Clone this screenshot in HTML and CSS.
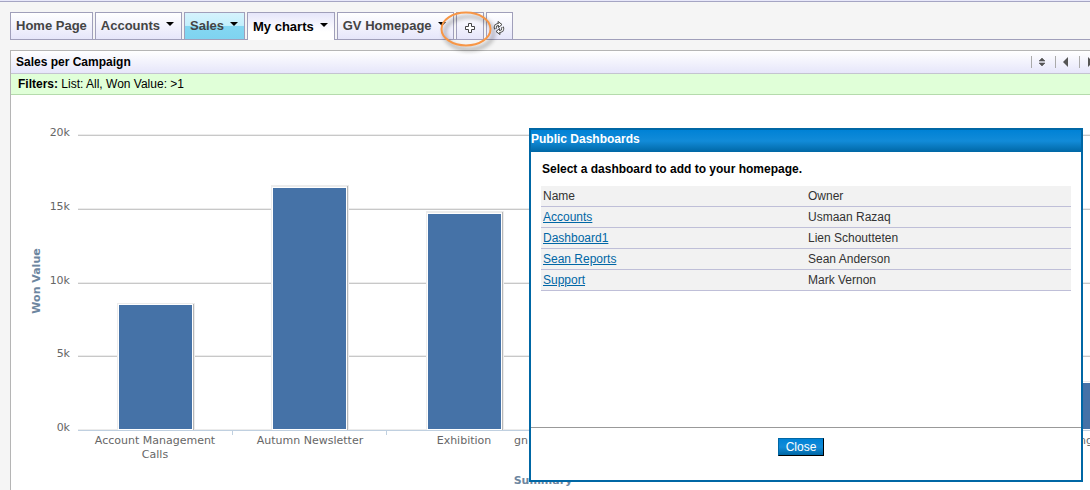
FILE: index.html
```html
<!DOCTYPE html>
<html lang="en">
<head>
<meta charset="utf-8">
<title>Sales per Campaign</title>
<link rel="stylesheet" href="styles.css">
</head>
<body>
<div class="topline"></div>
<nav class="tabs">
  <button class="tab">Home Page</button>
  <button class="tab">Accounts<span class="caret"></span></button>
  <button class="tab tab-sales">Sales<span class="caret"></span></button>
  <button class="tab tab-active">My charts<span class="caret"></span></button>
  <button class="tab">GV Homepage<span class="caret"></span></button>
  <button class="tab tab-icon" aria-label="Add dashboard">
    <svg width="12" height="12" viewBox="0 0 12 12"><path d="M4.500 1.500h3v3h3v3h-3v3h-3v-3h-3v-3h3z" fill="#fff" stroke="#444"/></svg>
    <svg class="ring" width="64" height="48" viewBox="0 0 64 48"><ellipse cx="31" cy="24" rx="24.500" ry="16.500" fill="none" stroke="#f79646" stroke-width="2"/></svg>
  </button>
  <button class="tab tab-icon tab-refresh" aria-label="Refresh">
    <svg width="12" height="16" viewBox="0 0 12 16"><g fill="none" stroke="#444" stroke-width="3"><path d="M2.500 9C1.500 6 3 4.500 6 4.500"/><path d="M9.500 7C10.500 10 9 11.500 6 11.500"/></g><g fill="#fff" stroke="#444" stroke-linejoin="round"><path d="M5 1.500L9 4.500 5.500 7.500z"/><path d="M7 14.500L3 11.500 6.500 8.500z"/></g><g fill="none" stroke="#fff" stroke-width="1.200"><path d="M2.500 8.500C1.500 6 3 4.500 6 4.500"/><path d="M9.500 7.500C10.500 10 9 11.500 6 11.500"/></g></svg>
  </button>
</nav>
<main class="panel">
  <header class="panel-head">
    <h1 class="panel-title">Sales per Campaign</h1>
    <div class="tools">
      <button class="tool" aria-label="Collapse"><svg width="8" height="10" viewBox="0 0 8 10"><path d="M1 4L4 1l3 3zM1 6h6L4 9z" fill="#555" stroke="#555" stroke-width=".6"/></svg></button>
      <button class="tool" aria-label="Move left"><svg width="8" height="10" viewBox="0 0 8 10"><path d="M6 0v10L1 5z" fill="#555"/></svg></button>
      <button class="tool" aria-label="Move right"><svg width="8" height="10" viewBox="0 0 8 10"><path d="M2 0v10L7 5z" fill="#555"/></svg></button>
      <span class="tool"></span>
      <span class="tool"></span>
    </div>
  </header>
  <p class="filters"><b>Filters:</b> List: All, Won Value: &gt;1</p>
  <svg class="chart" width="1140" height="395" viewBox="11 95 1140 395">
    <g class="grid-soft"><path d="M78 134.500H1151M78 208.500H1151M78 282.500H1151M78 355.500H1151M78 429.500H1151"/></g>
    <g class="grid"><path d="M78 135.500H1151M78 209.500H1151M78 283.500H1151M78 356.500H1151"/></g>
    <path class="axis" d="M78 430.500H1151M232.500 430v5M386.500 430v5M541.500 430v5M1005.500 430v5"/>
    <g class="bar-shade">
      <path d="M117 303h78v127h-78zM271 185h78v245h-78zM426 211h78v219h-78zM1044 381h78v49h-78z"/>
    </g>
    <g class="bar-edge">
      <path d="M193 304h1v126h-1zM347 186h1v244h-1zM502 212h1v218h-1z"/>
    </g>
    <g class="bar">
      <rect x="118.500" y="304.500" width="74" height="125"/>
      <rect x="272.500" y="187.500" width="74" height="242"/>
      <rect x="427.500" y="213.500" width="74" height="216"/>
      <rect x="1045.500" y="382.500" width="74" height="47"/>
    </g>
    <g class="label label-y">
      <text x="70" y="136">20k</text>
      <text x="70" y="210">15k</text>
      <text x="70" y="284">10k</text>
      <text x="70" y="357">5k</text>
      <text x="70" y="431">0k</text>
    </g>
    <g class="label label-x">
      <text x="155" y="444">Account Management</text>
      <text x="155" y="458">Calls</text>
      <text x="310" y="444">Autumn Newsletter</text>
      <text x="464" y="444">Exhibition</text>
      <text x="521" y="444">gn</text>
      <text x="1086" y="444">ng</text>
    </g>
    <text class="axis-title" transform="translate(40 281) rotate(-90)">Won Value</text>
    <text class="axis-title" x="543" y="484">Summary</text>
  </svg>
</main>
<section class="dialog" role="dialog" aria-labelledby="dialog-title">
  <h2 class="dialog-title" id="dialog-title">Public Dashboards</h2>
  <div class="dialog-body">
    <p class="prompt">Select a dashboard to add to your homepage.</p>
    <table class="list">
      <thead><tr><th>Name</th><th>Owner</th></tr></thead>
      <tbody>
        <tr><td><a href="#">Accounts</a></td><td>Usmaan Razaq</td></tr>
        <tr><td><a href="#">Dashboard1</a></td><td>Lien Schoutteten</td></tr>
        <tr><td><a href="#">Sean Reports</a></td><td>Sean Anderson</td></tr>
        <tr><td><a href="#">Support</a></td><td>Mark Vernon</td></tr>
      </tbody>
    </table>
  </div>
  <footer class="dialog-foot"><button class="close">Close</button></footer>
</section>
</body>
</html>
```
FILE: styles.css
```css
* { box-sizing: border-box; }
html { overflow: hidden; }
body {
  margin: 0;
  position: relative;
  overflow: hidden;
  background: #f5f5f5;
  color: #000;
  font: 12px/16px "Liberation Sans", Arial, sans-serif;
}
h1, h2, p { margin: 0; font-size: 12px; }
button { font: inherit; margin: 0; cursor: pointer; }

.topline { height: 2px; background: #e8e8fa; border-bottom: 1px solid #a5a5c3; }
.tabs {
  display: flex;
  gap: 2px;
  margin-left: 10px;
  padding-top: 10px;
  border-bottom: 1px solid #a09fba;
}
.tab {
  display: flex;
  align-items: center;
  height: 27px;
  padding: 0 5px;
  border: 1px solid #a09fba;
  border-bottom: 0;
  background: linear-gradient(#fff, #e6e6fa);
  color: #444;
  font-size: 13px;
  font-weight: bold;
  white-space: nowrap;
}
.tab-sales {
  padding-right: 4px;
  background: linear-gradient(#d6f3fd 0%, #c3effc 48%, #84d7f2 50%, #7fd3f0 100%);
}
.tab-active {
  height: 28px;
  margin-bottom: -1px;
  padding-right: 4px;
  background: linear-gradient(#e6e6fa, #fff 70%);
  color: #000;
}
.tab-icon {
  position: relative;
  width: 28px;
  justify-content: center;
  padding: 4px 0 0;
}
.tab-refresh { width: 27px; }
.caret {
  margin: 0 2px 4px 6px;
  border: 4px solid transparent;
  border-top-color: #000;
  border-bottom: 0;
}
.ring {
  position: absolute;
  left: -22px;
  top: -8px;
  z-index: 1;
  filter: drop-shadow(3px 4px 2px rgba(0, 0, 0, .45));
}

.panel {
  margin: 10px -62px 0 10px;
  border: 1px solid #b5b5b5;
  border-bottom: 0;
  background: #fff;
}
.panel-head {
  display: flex;
  justify-content: space-between;
  align-items: center;
  height: 23px;
  padding-left: 5px;
  border-bottom: 1px solid #c4c4d0;
  background: linear-gradient(#fff, #e6e6fa);
}
.tools { display: flex; }
.tool {
  display: flex;
  align-items: center;
  width: 24px;
  height: 12px;
  padding: 0 0 0 6px;
  border: 0;
  border-left: 1px solid #aaa;
  background: none;
}
.filters {
  padding: 2px 7px;
  border-bottom: 1px solid #b5dbac;
  background: #e0ffd8;
}
.chart { display: block; }
.grid-soft { stroke: #ececec; }
.grid { stroke: #c8c8c8; }
.axis { stroke: #c0d0e0; fill: none; }
.bar-shade { fill: #ececec; }
.bar-edge { fill: #b8b8b8; }
.bar { fill: #4572a7; stroke: #fff; }
.label { font: 11px "DejaVu Sans", sans-serif; fill: #666; }
.label-y { text-anchor: end; }
.label-x { text-anchor: middle; }
.axis-title {
  font: bold 11px "DejaVu Sans", sans-serif;
  fill: #6d869f;
  text-anchor: middle;
}

.dialog {
  position: absolute;
  top: 128px;
  right: 7px;
  width: 554px;
  border: 2px solid #0067a5;
  background: #fff;
}
.dialog-title {
  height: 22px;
  line-height: 18px;
  background: linear-gradient(#0082d6, #128bd8 50%, #0067a5);
  color: #fff;
}
.dialog-body { min-height: 275px; padding: 9px 10px; }
.prompt { padding-left: 1px; font-weight: bold; }
.list {
  width: 100%;
  margin-top: 9px;
  border-spacing: 0;
  background: #f2f2f2;
  color: #333;
}
.list th, .list td {
  width: 50%;
  height: 21px;
  padding: 0 2px;
  border-bottom: 1px solid #bfbfd8;
  font-weight: normal;
  text-align: left;
}
.list a { color: #0067a5; }
.dialog-foot {
  display: flex;
  justify-content: center;
  padding: 10px 10px 24px 0;
  border-top: 1px solid #999;
}
.close {
  height: 18px;
  padding: 0 7px;
  border: 1px solid #0067a5;
  border-right-color: #000;
  border-bottom-color: #000;
  background: linear-gradient(#0082d6, #128bd8 50%, #0067a5);
  color: #fff;
  line-height: 16px;
}
```
